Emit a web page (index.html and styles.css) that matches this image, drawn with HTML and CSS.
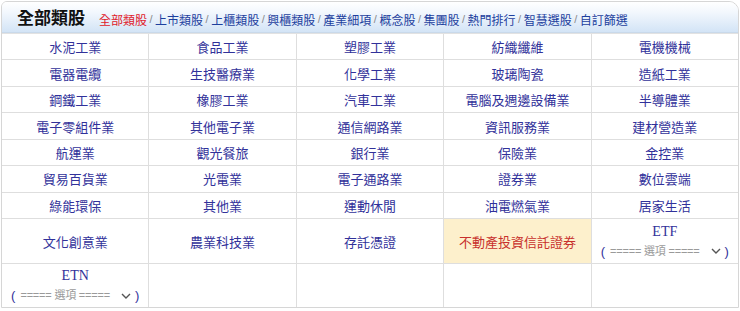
FILE: index.html
```html
<!DOCTYPE html>
<html lang="zh-Hant">
<head>
<meta charset="utf-8">
<title>全部類股</title>
<link rel="stylesheet" href="styles.css">
</head>
<body>
<div class="box">
  <div class="head">
    <h1 class="title">全部類股</h1>
    <nav class="links">
      <a class="cur">全部類股</a><span class="sep">/</span><a>上市類股</a><span class="sep">/</span><a>上櫃類股</a><span class="sep">/</span><a>興櫃類股</a><span class="sep">/</span><a>產業細項</a><span class="sep">/</span><a>概念股</a><span class="sep">/</span><a>集團股</a><span class="sep">/</span><a>熱門排行</a><span class="sep">/</span><a>智慧選股</a><span class="sep">/</span><a>自訂篩選</a>
    </nav>
  </div>
  <div class="grid">
    <div class="cell">水泥工業</div><div class="cell">食品工業</div><div class="cell">塑膠工業</div><div class="cell">紡織纖維</div><div class="cell">電機機械</div>
    <div class="cell">電器電纜</div><div class="cell">生技醫療業</div><div class="cell">化學工業</div><div class="cell">玻璃陶瓷</div><div class="cell">造紙工業</div>
    <div class="cell">鋼鐵工業</div><div class="cell">橡膠工業</div><div class="cell">汽車工業</div><div class="cell">電腦及週邊設備業</div><div class="cell">半導體業</div>
    <div class="cell">電子零組件業</div><div class="cell">其他電子業</div><div class="cell">通信網路業</div><div class="cell">資訊服務業</div><div class="cell">建材營造業</div>
    <div class="cell">航運業</div><div class="cell">觀光餐旅</div><div class="cell">銀行業</div><div class="cell">保險業</div><div class="cell">金控業</div>
    <div class="cell">貿易百貨業</div><div class="cell">光電業</div><div class="cell">電子通路業</div><div class="cell">證券業</div><div class="cell">數位雲端</div>
    <div class="cell">綠能環保</div><div class="cell">其他業</div><div class="cell">運動休閒</div><div class="cell">油電燃氣業</div><div class="cell">居家生活</div>
    <div class="cell">文化創意業</div><div class="cell">農業科技業</div><div class="cell">存託憑證</div><div class="cell hl">不動產投資信託證券</div>
    <div class="cell stack"><span class="en">ETF</span><span class="pick">(<span class="opt">===== 選項 =====</span><svg class="chev" width="10" height="6" viewBox="0 0 10 6"><path d="M1 1l4 4 4-4" fill="none" stroke="#555" stroke-width="1.4"/></svg>)</span></div>
    <div class="cell stack"><span class="en">ETN</span><span class="pick">(<span class="opt">===== 選項 =====</span><svg class="chev" width="10" height="6" viewBox="0 0 10 6"><path d="M1 1l4 4 4-4" fill="none" stroke="#555" stroke-width="1.4"/></svg>)</span></div>
    <div class="cell"></div><div class="cell"></div><div class="cell"></div><div class="cell"></div>
  </div>
</div>
</body>
</html>
```
FILE: styles.css
```css
html, body {
  margin: 0;
  padding: 0;
  background: #ffffff;
}
body {
  font-family: "Noto Sans CJK TC", "Noto Sans", sans-serif;
}
.box {
  margin: 1px 0 0 1px;
  width: 738px;
  box-sizing: border-box;
  border: 1px solid #d6d6d6;
  border-radius: 6px 10px 0 0;
  overflow: hidden;
}
.head {
  height: 31px;
  box-sizing: border-box;
  display: flex;
  align-items: center;
  padding-left: 15px;
  background: linear-gradient(to bottom, #ffffff 0%, #f2f7fd 35%, #d3e4f6 100%);
  border-bottom: 1px solid #c9d9ea;
}
.title {
  margin: 0 0 2px 0;
  font-size: 17px;
  font-weight: 700;
  color: #111;
  line-height: 1;
}
.links {
  margin-left: 14px;
  margin-top: 5px;
  font-size: 12px;
  line-height: 1;
  color: #2145a0;
  display: flex;
  align-items: center;
}
.links a {
  color: #1d3f9e;
}
.links a.cur {
  color: #e0202a;
}
.sep {
  color: #8a8a8a;
  font-family: "Liberation Sans", sans-serif;
  font-size: 11px;
  padding: 0 2.5px;
}
.grid {
  display: grid;
  grid-template-columns: repeat(5, 1fr);
  grid-template-rows: repeat(7, 25.45px) 44px 43px;
  gap: 1px;
  background: #dedede;
  border-top: 1px solid #e2e2e2;
}
.cell {
  background: #fff;
  display: flex;
  align-items: center;
  justify-content: center;
  font-size: 13px;
  color: #31319a;
  line-height: 1;
}
.cell.hl {
  background: #fdf0cc;
  color: #c8302c;
}
.stack {
  flex-direction: column;
  gap: 6px;
}
.en {
  font-family: "Liberation Serif", serif;
  font-size: 14px;
  color: #31319a;
}
.pick {
  display: flex;
  align-items: center;
  font-family: "Liberation Sans", sans-serif;
  font-size: 13px;
  color: #31319a;
}
.opt {
  font-size: 11px;
  color: #9a9a9a;
  font-family: "Liberation Sans", "Noto Sans CJK TC", sans-serif;
  margin: 0 4px 0 5px;
  letter-spacing: -0.2px;
}
.chev {
  margin: 0 4px 0 7px;
}
```
